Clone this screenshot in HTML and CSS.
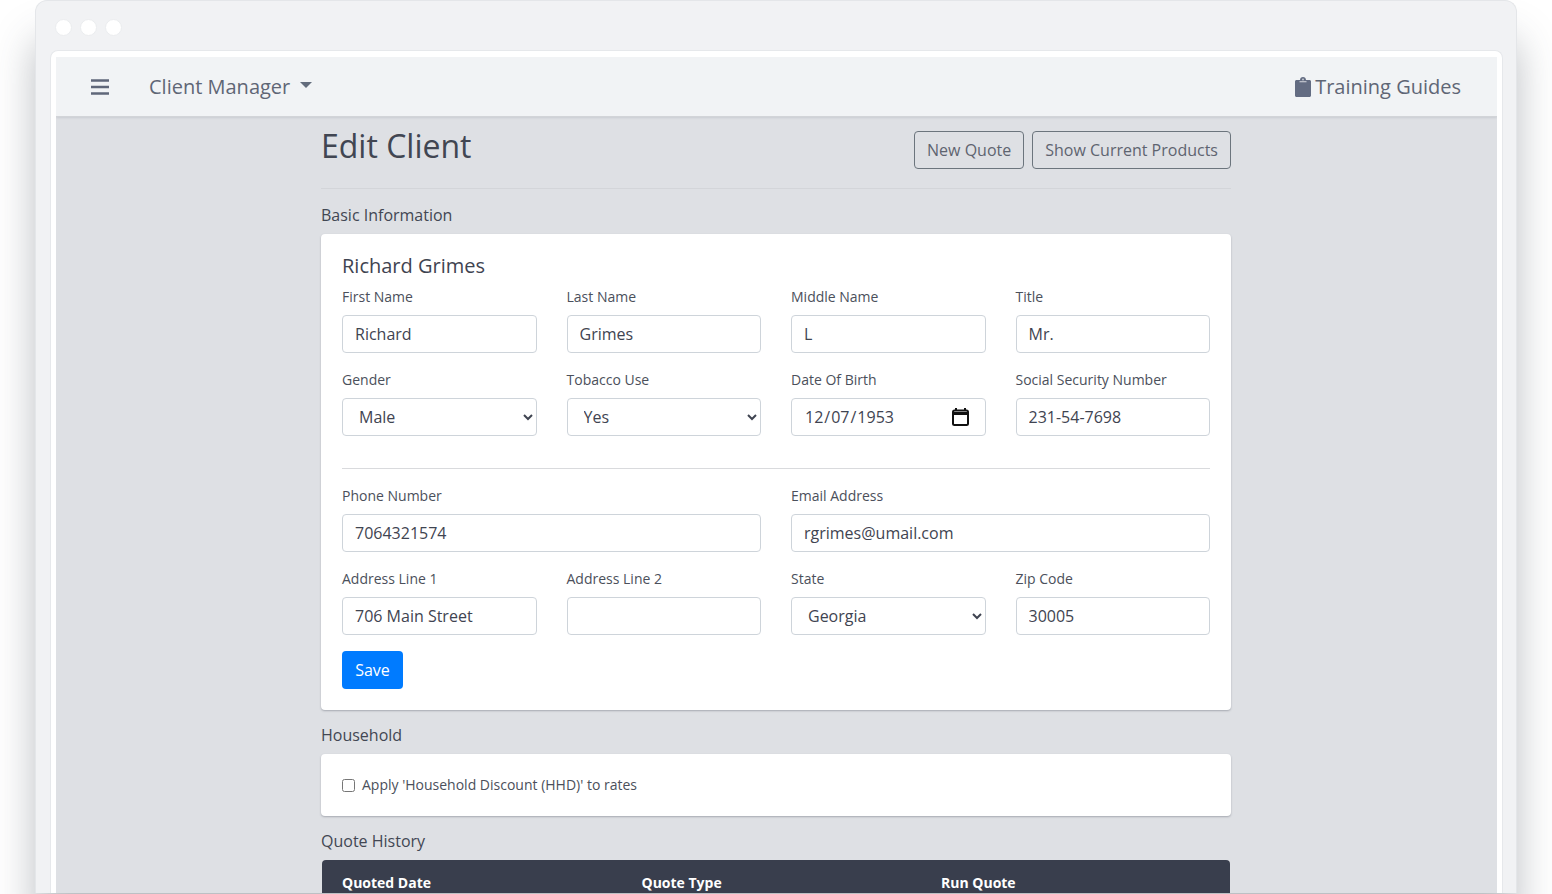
FILE: index.html
```html
<!DOCTYPE html>
<html lang="en">
<head>
<meta charset="utf-8">
<title>Edit Client</title>
<link rel="stylesheet" href="styles.css">
</head>
<body>
<div class="window">
  <div class="dots"><span class="dot"></span><span class="dot"></span><span class="dot"></span></div>
  <div class="frame">
    <div class="app">
      <nav class="navbar">
        <svg class="burger" width="18" height="16" viewBox="0 0 18 16"><path d="M0 1.5h18M0 8h18M0 14.500h18" stroke="#5f6779" stroke-width="2.600" fill="none"/></svg>
        <span class="brand">Client Manager</span>
        <span class="caret"></span>
        <a class="guides">
          <svg width="16" height="20" viewBox="0 0 16 20"><path d="M1.500 3H5C5 1.300 6.300 0 8 0s3 1.300 3 3h3.500c.8 0 1.500.7 1.500 1.500v14c0 .8-.7 1.500-1.500 1.500h-13C.7 20 0 19.300 0 18.500v-14C0 3.700.7 3 1.500 3z" fill="#636c82"/><path d="M4.500 4.700h7" stroke="#c3c7d0" stroke-width="1.200"/><circle cx="8" cy="2.500" r="1" fill="#c3c7d0"/></svg>
          <span>Training Guides</span>
        </a>
      </nav>
      <main class="content">
        <header class="page-head">
          <h1>Edit Client</h1>
          <div class="actions">
            <button class="btn-outline">New Quote</button>
            <button class="btn-outline">Show Current Products</button>
          </div>
        </header>
        <h2 class="section first">Basic Information</h2>
        <section class="card form-card">
          <h3>Richard Grimes</h3>
          <div class="grid">
            <div class="field"><label>First Name</label><input value="Richard"></div>
            <div class="field"><label>Last Name</label><input value="Grimes"></div>
            <div class="field"><label>Middle Name</label><input value="L"></div>
            <div class="field"><label>Title</label><input value="Mr."></div>
            <div class="field"><label>Gender</label><select><option>Male</option></select></div>
            <div class="field"><label>Tobacco Use</label><select><option>Yes</option></select></div>
            <div class="field"><label>Date Of Birth</label><input type="date" value="1953-12-07"></div>
            <div class="field"><label>Social Security Number</label><input value="231-54-7698"></div>
          </div>
          <hr class="divider">
          <div class="grid">
            <div class="field wide"><label>Phone Number</label><input value="7064321574"></div>
            <div class="field wide"><label>Email Address</label><input value="rgrimes@umail.com"></div>
            <div class="field"><label>Address Line 1</label><input value="706 Main Street"></div>
            <div class="field"><label>Address Line 2</label><input value=""></div>
            <div class="field"><label>State</label><select><option>Georgia</option></select></div>
            <div class="field"><label>Zip Code</label><input value="30005"></div>
          </div>
          <button class="btn-save">Save</button>
        </section>
        <h2 class="section">Household</h2>
        <section class="card check-card">
          <label class="check"><input type="checkbox"><span>Apply 'Household Discount (HHD)' to rates</span></label>
        </section>
        <h2 class="section">Quote History</h2>
        <div class="table-head">
          <span>Quoted Date</span><span>Quote Type</span><span>Run Quote</span>
        </div>
      </main>
    </div>
  </div>
</div>
</body>
</html>
```
FILE: styles.css
```css
* { box-sizing: border-box; }
html, body { margin: 0; height: 894px; overflow: hidden; background: #fff; }
body { font-family: "Open Sans", sans-serif; color: #3f4451; }

.window {
  width: 1482px;
  height: 893px;
  margin-left: 35px;
  background: #f1f2f4;
  border: 1px solid #e4e6e9;
  border-bottom: 0;
  border-radius: 12px 12px 0 0;
  box-shadow: 0 40px 40px rgba(60, 66, 80, .34);
  display: flex;
  flex-direction: column;
}
.dots { display: flex; gap: 8px; height: 49px; padding: 18px 0 0 19px; flex: none; }
.dot { width: 17px; height: 17px; border-radius: 50%; background: #fff; border: 1px solid #ebedef; }

.frame {
  width: 1453px;
  margin-left: 14px;
  flex: 1;
  min-height: 0;
  background: #fff;
  border: 1px solid #e6e8eb;
  border-bottom: 0;
  border-radius: 8px 8px 0 0;
  padding: 6px 5px 0;
}
.app { height: 100%; background: #dee0e4; overflow: hidden; display: flex; flex-direction: column; }

.navbar {
  height: 60px;
  flex: none;
  background: #f1f3f5;
  border-bottom: 1px solid #d2d4d8;
  box-shadow: 0 1px 2px rgba(60, 66, 80, .12);
  display: flex;
  align-items: center;
  padding: 0 36px 0 35px;
  color: #5f6675;
  font-size: 20px;
}
.burger { margin-right: 40px; }
.caret {
  margin-left: 10px;
  margin-top: -3px;
  border-left: 6px solid transparent;
  border-right: 6px solid transparent;
  border-top: 6px solid #636c7c;
}
.guides { margin-left: auto; display: flex; align-items: center; gap: 4px; }

.content { width: 910px; margin-left: 265px; }
.page-head {
  height: 72px;
  border-bottom: 1px solid #d3d5d9;
  display: flex;
  justify-content: space-between;
  padding-top: 14px;
}
h1 { margin: -1px 0 0; font-size: 32px; font-weight: 400; line-height: 32px; color: #414652; }
.actions { display: flex; gap: 8px; height: 38px; }
.btn-outline {
  font: 16px "Open Sans", sans-serif;
  color: #5e6470;
  background: transparent;
  border: 1px solid #6c757d;
  border-radius: 4px;
  padding: 0 12px;
  height: 38px;
}
.section { margin: 0; font-size: 16px; font-weight: 400; line-height: 22px; color: #424753; padding-top: 14px; height: 44px; }
.section.first { height: 45px; padding-top: 15px; }
.card {
  background: #fff;
  border-radius: 4px;
  box-shadow: 0 1px 2px rgba(60, 66, 80, .35);
}
.form-card { height: 476px; padding: 20px 21px 0 21px; }
h3 { margin: 0; font-size: 20px; font-weight: 400; line-height: 24px; color: #3f4451; height: 30px; }
.grid { display: grid; grid-template-columns: repeat(4, 194.750px); column-gap: 29.750px; row-gap: 14px; }
.field { height: 69px; }
.wide { grid-column: span 2; }
label { display: block; font-size: 14px; line-height: 20px; height: 31px; color: #4b505b; padding-top: 3px; }
.field input, .field select {
  width: 100%;
  height: 38px;
  font: 16px "Open Sans", sans-serif;
  color: #3f4451;
  background: #fff;
  border: 1px solid #ced4da;
  border-radius: 4px;
  padding: 0 12px;
  display: block;
}
.field input::-webkit-calendar-picker-indicator {
  width: 17px;
  height: 18px;
  padding: 0;
  margin: 0 4px 0 0;
  background: url("data:image/svg+xml,%3Csvg xmlns='http://www.w3.org/2000/svg' viewBox='0 0 17 18'%3E%3Cpath d='M4 0v3M13 0v3' stroke='%23111' stroke-width='2'/%3E%3Crect x='1' y='2.500' width='15' height='14.500' rx='1.500' fill='none' stroke='%23111' stroke-width='2'/%3E%3Cpath d='M1 5.500h15' stroke='%23111' stroke-width='3'/%3E%3C/svg%3E") center / contain no-repeat;
}
.divider { border: 0; border-top: 1px solid #d9dadd; margin: 32px 0 14px; }
.btn-save {
  display: block;
  margin-top: 16px;
  width: 61px;
  height: 38px;
  font: 16px "Open Sans", sans-serif;
  color: #fff;
  background: #007bff;
  border: 0;
  border-radius: 4px;
}
.check-card { height: 62px; padding: 21px 21px 0; }
.check { display: flex; align-items: center; gap: 7px; height: 20px; padding: 0; }
.check input { width: 13px; height: 13px; margin: 0; }
.table-head {
  height: 60px;
  margin: 0 1px;
  background: #393e4d;
  border-radius: 4px 4px 0 0;
  color: #fff;
  font-size: 14px;
  font-weight: 700;
  display: grid;
  grid-template-columns: 299.500px 299.500px 1fr;
  padding: 13px 20px 0;
}
```
